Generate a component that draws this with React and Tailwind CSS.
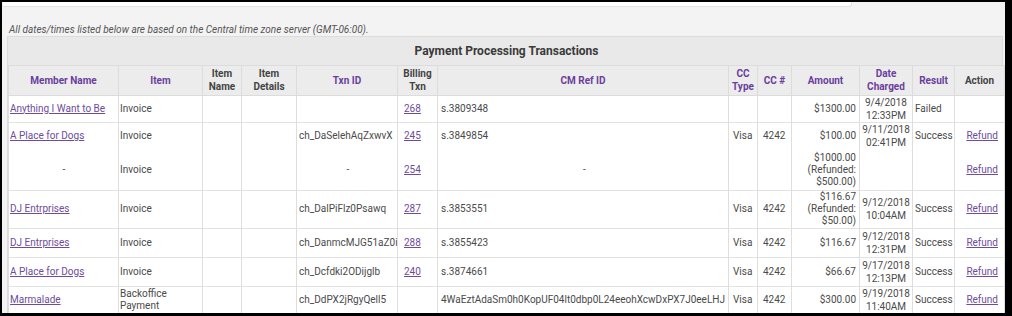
import React from "react";

const cols = [
  { w: 110, label: ["Member Name"], purple: true },
  { w: 84, label: ["Item"], purple: true },
  { w: 39, label: ["Item", "Name"] },
  { w: 55, label: ["Item", "Details"] },
  { w: 101, label: ["Txn ID"], purple: true },
  { w: 40, label: ["Billing", "Txn"] },
  { w: 291, label: ["CM Ref ID"], purple: true },
  { w: 29, label: ["CC", "Type"], purple: true },
  { w: 34, label: ["CC #"], purple: true },
  { w: 68, label: ["Amount"], purple: true },
  { w: 53, label: ["Date", "Charged"], purple: true },
  { w: 42, label: ["Result"], purple: true },
  { w: 50, label: ["Action"] },
];

const rows = [
  { member: "Anything I Want to Be", item: ["Invoice"], txn: "", billing: "268", ref: "s.3809348", type: "", cc: "", amount: ["$1300.00"], date: ["9/4/2018", "12:33PM"], result: "Failed", action: false, h: 27 },
  { member: "A Place for Dogs", item: ["Invoice"], txn: "ch_DaSelehAqZxwvX", billing: "245", ref: "s.3849854", type: "Visa", cc: "4242", amount: ["$100.00"], date: ["9/11/2018", "02:41PM"], result: "Success", action: true, h: 28, noBottom: true },
  { member: "-", item: ["Invoice"], txn: "-", billing: "254", ref: "-", type: "", cc: "", amount: ["$1000.00", "(Refunded:", "$500.00)"], date: [], result: "", action: true, h: 40, sub: true },
  { member: "DJ Entrprises", item: ["Invoice"], txn: "ch_DalPiFlz0Psawq", billing: "287", ref: "s.3853551", type: "Visa", cc: "4242", amount: ["$116.67", "(Refunded:", "$50.00)"], date: ["9/12/2018", "10:04AM"], result: "Success", action: true, h: 38 },
  { member: "DJ Entrprises", item: ["Invoice"], txn: "ch_DanmcMJG51aZ0i", billing: "288", ref: "s.3855423", type: "Visa", cc: "4242", amount: ["$116.67"], date: ["9/12/2018", "12:31PM"], result: "Success", action: true, h: 29 },
  { member: "A Place for Dogs", item: ["Invoice"], txn: "ch_Dcfdki2ODijglb", billing: "240", ref: "s.3874661", type: "Visa", cc: "4242", amount: ["$66.67"], date: ["9/17/2018", "12:13PM"], result: "Success", action: true, h: 29 },
  { member: "Marmalade", item: ["Backoffice", "Payment"], txn: "ch_DdPX2jRgyQell5", billing: "", ref: "4WaEztAdaSm0h0KopUF04lt0dbp0L24eeohXcwDxPX7J0eeLHJ", type: "Visa", cc: "4242", amount: ["$300.00"], date: ["9/19/2018", "11:40AM"], result: "Success", action: true, h: 28 },
];

const Link = ({ children }) => (
  <span className="text-[#6e4b9c] underline underline-offset-[1px]">{children}</span>
);

const Lines = ({ lines }) => (
  <>
    {lines.map((l, i) => (
      <div key={i}>{l}</div>
    ))}
  </>
);

export default function App() {
  const td = "border-x border-[#dedede] align-middle p-0";
  return (
    <div className="w-[1012px] h-[316px] bg-black pt-[2px] pl-[2px] pr-[7px] pb-[3px]" style={{ fontFamily: "Roboto, 'Liberation Sans', sans-serif" }}>
      <div className="w-full h-full bg-[#f3f3f3] overflow-hidden">
        <div className="ml-[1px] w-[849px] h-[5px] bg-white border-b border-r border-[#e2e2e2] rounded-br-[3px]"></div>
        <div className="mt-[16px] pl-[7px] text-[10px] leading-[13px] italic text-[#555]">
          All dates/times listed below are based on the Central time zone server (GMT-06:00).
        </div>
        <div className="mt-[0px] ml-[5px] w-[996px] border border-[#dcdcdc] bg-[#e9e9e9]">
          <table className="table-fixed border-collapse w-[996px] text-[10px] leading-[12px] text-[#4a4a4a]">
            <colgroup>
              {cols.map((c, i) => (
                <col key={i} style={{ width: c.w }} />
              ))}
            </colgroup>
            <thead>
              <tr className="h-[28px]">
                <th colSpan={13} className="text-center text-[12px] font-bold text-[#3a3a3a] border-b border-[#dcdcdc]">
                  Payment Processing Transactions
                </th>
              </tr>
              <tr className="h-[30px] bg-[#ececec]">
                {cols.map((c, i) => (
                  <th
                    key={i}
                    className={`border-x border-b border-[#dcdcdc] text-center font-bold text-[10px] leading-[13px] align-middle ${c.purple ? "text-[#6a3e9c]" : "text-[#444]"}`}
                  >
                    <Lines lines={c.label} />
                  </th>
                ))}
              </tr>
            </thead>
            <tbody className="bg-white">
              {rows.map((r, i) => (
                <tr
                  key={i}
                  style={{ height: r.h }}
                  className={r.noBottom ? "" : "border-b border-[#e2e2e2]"}
                >
                  <td className={`${td} pl-[1px] ${r.sub ? "text-center" : ""}`}>
                    {r.sub ? "-" : <Link>{r.member}</Link>}
                  </td>
                  <td className={`${td} pl-[1px]`}>
                    <Lines lines={r.item} />
                  </td>
                  <td className={td}></td>
                  <td className={td}></td>
                  <td className={`${td} pl-[2px] ${r.txn === "-" ? "text-center" : ""} whitespace-nowrap overflow-hidden`}>{r.txn}</td>
                  <td className={`${td} pl-[6px]`}>{r.billing && <Link>{r.billing}</Link>}</td>
                  <td className={`${td} pl-[3px] ${r.ref === "-" ? "text-center" : ""}`}>{r.ref}</td>
                  <td className={`${td} pl-[4px]`}>{r.type}</td>
                  <td className={`${td} pl-[5px]`}>{r.cc}</td>
                  <td className={`${td} pr-[3px] text-right`}>
                    <Lines lines={r.amount} />
                  </td>
                  <td className={`${td} text-center leading-[13px]`}>
                    <Lines lines={r.date} />
                  </td>
                  <td className={`${td} pl-[2px]`}>{r.result}</td>
                  <td className={`${td} pr-[6px] text-right`}>{r.action && <Link>Refund</Link>}</td>
                </tr>
              ))}
            </tbody>
          </table>
        </div>
      </div>
    </div>
  );
}
